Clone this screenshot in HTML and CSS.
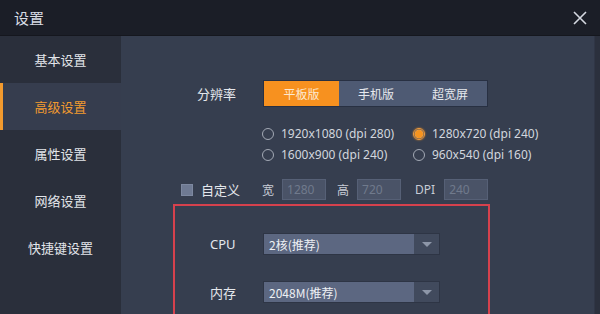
FILE: index.html
```html
<!DOCTYPE html>
<html lang="zh-CN">
<head>
<meta charset="utf-8">
<title>设置</title>
<link rel="stylesheet" href="styles.css">
</head>
<body>
<div class="window">
  <div class="titlebar">
    <span class="title">设置</span>
    <svg class="close" width="14" height="14" viewBox="0 0 14 14"><path d="M1 1L13 13M13 1L1 13" stroke="#d4d8e0" stroke-width="1.6" fill="none"/></svg>
  </div>
  <div class="content">
    <nav class="sidebar">
      <div class="nav-item">基本设置</div>
      <div class="nav-item active">高级设置</div>
      <div class="nav-item">属性设置</div>
      <div class="nav-item">网络设置</div>
      <div class="nav-item">快捷键设置</div>
    </nav>
    <main class="main">
      <div class="res-row">
        <span class="label">分辨率</span>
        <div class="segment">
          <span class="seg seg-on">平板版</span>
          <span class="seg">手机版</span>
          <span class="seg">超宽屏</span>
        </div>
      </div>
      <div class="radios">
        <div class="radio"><span class="dot"></span>1920x1080 (dpi 280)</div>
        <div class="radio"><span class="dot dot-on"></span>1280x720 (dpi 240)</div>
        <div class="radio"><span class="dot"></span>1600x900 (dpi 240)</div>
        <div class="radio"><span class="dot"></span>960x540 (dpi 160)</div>
      </div>
      <div class="custom-row">
        <span class="check"></span>
        <span class="custom-label">自定义</span>
        <span class="f-label f-w">宽</span>
        <span class="field">1280</span>
        <span class="f-label f-h">高</span>
        <span class="field">720</span>
        <span class="f-label f-dpi">DPI</span>
        <span class="field">240</span>
      </div>
      <div class="perf-box">
        <div class="sel-row">
          <span class="sel-label">CPU</span>
          <div class="select"><span class="sel-text">2核(推荐)</span><span class="sel-arrow"></span></div>
        </div>
        <div class="sel-row">
          <span class="sel-label">内存</span>
          <div class="select"><span class="sel-text">2048M(推荐)</span><span class="sel-arrow"></span></div>
        </div>
      </div>
    </main>
    <div class="edge"></div>
  </div>
</div>
</body>
</html>
```
FILE: styles.css
```css
* { box-sizing: border-box; }
html, body {
  margin: 0;
  padding: 0;
  width: 600px;
  height: 314px;
  overflow: hidden;
  background: #363e4f;
  font-family: "Noto Sans CJK SC", "Noto Sans", sans-serif;
}
.window {
  display: flex;
  flex-direction: column;
  width: 600px;
  height: 314px;
}
.titlebar {
  height: 36px;
  flex: none;
  background: #1b1e27;
  display: flex;
  align-items: center;
  justify-content: space-between;
  padding: 0 13px 0 14px;
  border-bottom: 1px solid #15171e;
}
.title {
  color: #d8dce4;
  font-size: 15px;
  line-height: 1;
}
.close { display: block; }
.content {
  flex: 1;
  display: flex;
  min-height: 0;
}
.sidebar {
  width: 121px;
  flex: none;
  background: #2a2f3b;
  display: flex;
  flex-direction: column;
}
.nav-item {
  height: 47px;
  display: flex;
  align-items: center;
  justify-content: center;
  color: #e2e5ea;
  font-size: 13px;
}
.nav-item.active {
  background: #363d4e;
  color: #f29a2e;
  border-left: 3px solid #f29a2e;
  padding-right: 3px;
}
.main {
  flex: 1;
  background: #363e4f;
  padding: 44px 0 0 52px;
  display: flex;
  flex-direction: column;
}
.edge {
  width: 6px;
  flex: none;
  background: #2b303d;
  border-left: 1px solid #303646;
}
.res-row {
  display: flex;
  align-items: center;
  padding-left: 24px;
  height: 27px;
}
.label {
  width: 66px;
  color: #e4e7ec;
  font-size: 13px;
}
.segment {
  display: flex;
  height: 27px;
  border: 1px solid #283042;
  background: #4e5a73;
}
.seg {
  width: 74px;
  display: flex;
  align-items: center;
  justify-content: center;
  color: #e6e9ee;
  font-size: 12px;
}
.seg-on {
  width: 75px;
  background: #f7911f;
  color: #fde8cf;
}
.radios {
  margin: 16px 0 0 89px;
  display: grid;
  grid-template-columns: 151px auto;
  grid-auto-rows: 21px;
}
.radio {
  display: flex;
  align-items: center;
  color: #d2d6de;
  font-family: "Noto Sans", sans-serif;
  font-size: 12px;
  gap: 7px;
}
.dot {
  width: 12px;
  height: 12px;
  border-radius: 50%;
  border: 1px solid #a3a9b5;
  flex: none;
}
.dot-on {
  border-color: #f7a040;
  background: radial-gradient(circle, #f7941f 0 3.5px, #e8a050 4px, #5a4a3a 5px);
  box-shadow: 0 0 2px #f7911f;
}
.custom-row {
  margin-top: 14px;
  padding-left: 8px;
  display: flex;
  align-items: center;
  height: 21px;
}
.check {
  width: 12px;
  height: 12px;
  background: #6f7a93;
  border: 1px solid #7d88a0;
}
.custom-label {
  margin-left: 8px;
  color: #e4e7ec;
  font-size: 13px;
}
.f-label {
  color: #c8ccd6;
  font-size: 12px;
  margin-right: 8px;
}
.f-w { margin-left: 22px; }
.f-h { margin-left: 11px; }
.f-dpi { margin-left: 14px; margin-right: 9px; font-family: "Noto Sans", sans-serif; }
.field {
  width: 44px;
  height: 21px;
  background: #4a5367;
  border: 1px solid #566076;
  color: #707a8c;
  font-family: "Noto Sans", sans-serif;
  font-size: 12px;
  padding-left: 4px;
  display: flex;
  align-items: center;
}
.perf-box {
  margin-top: 4px;
  width: 317px;
  flex: 1;
  border: 2px solid #d6414d;
  border-bottom: none;
  padding: 27px 0 0 35px;
  display: flex;
  flex-direction: column;
  gap: 26px;
}
.sel-row {
  display: flex;
  align-items: center;
  height: 22px;
}
.sel-label {
  width: 53px;
  color: #e4e7ec;
  font-size: 13px;
  font-family: "Noto Sans", "Noto Sans CJK SC", sans-serif;
}
.select {
  width: 177px;
  height: 22px;
  display: flex;
  border: 1px solid #2e3545;
  background: #5c6781;
}
.sel-text {
  flex: 1;
  color: #eef0f4;
  font-size: 12px;
  padding-left: 5px;
  display: flex;
  align-items: center;
}
.sel-arrow {
  width: 25px;
  background: #414a5d;
  display: flex;
  align-items: center;
  justify-content: center;
}
.sel-arrow::after {
  content: "";
  width: 0;
  height: 0;
  border-left: 5px solid transparent;
  border-right: 5px solid transparent;
  border-top: 5px solid #8d96a8;
}
```
